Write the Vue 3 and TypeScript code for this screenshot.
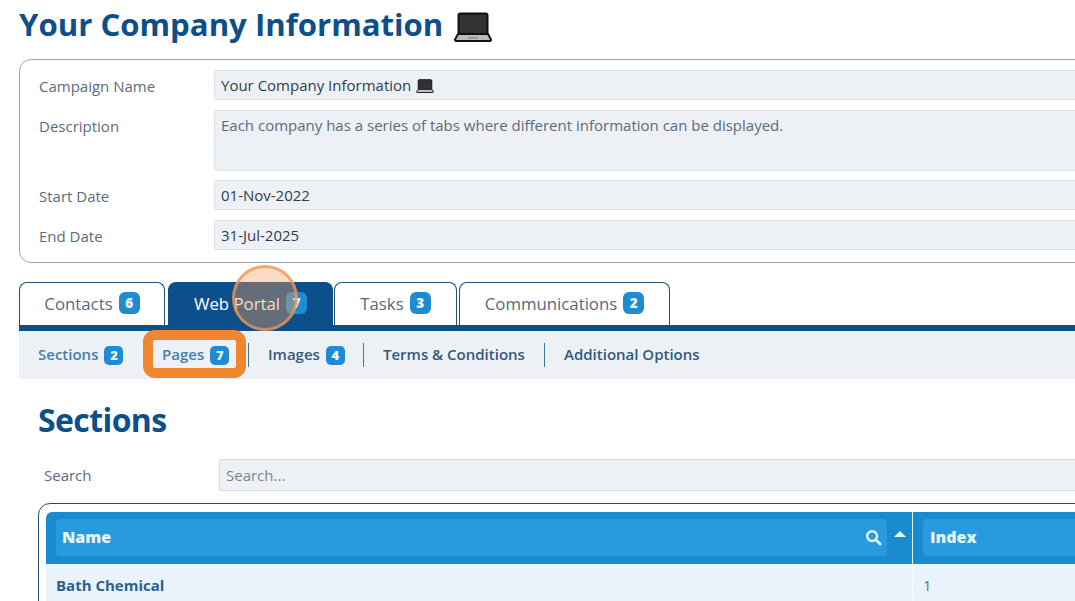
<script setup lang="ts">
const fields = [
  { label: 'Campaign Name', value: 'Your Company Information', icon: true, tall: false },
  { label: 'Description', value: 'Each company has a series of tabs where different information can be displayed.', icon: false, tall: true },
  { label: 'Start Date', value: '01-Nov-2022', icon: false, tall: false },
  { label: 'End Date', value: '31-Jul-2025', icon: false, tall: false },
]
const tabs = [
  { name: 'Contacts', n: 6, cls: 't-contacts' },
  { name: 'Web Portal', n: 7, cls: 't-web active' },
  { name: 'Tasks', n: 3, cls: 't-tasks' },
  { name: 'Communications', n: 2, cls: 't-comm' },
]
const subs = [
  { name: 'Sections', n: 2, cls: 's-sections light' },
  { name: 'Pages', n: 7, cls: 's-pages light' },
  { name: 'Images', n: 4, cls: 's-images' },
  { name: 'Terms & Conditions', n: 0, cls: 's-terms' },
  { name: 'Additional Options', n: 0, cls: 's-add' },
]
</script>

<template>
  <div class="page">
    <h1 class="title">
      <span>Your Company Information</span>
      <svg class="laptop-lg" viewBox="0 0 38 30" aria-hidden="true">
        <rect x="4.5" y="1.5" width="29" height="21" rx="2" fill="#333335" stroke="#111" stroke-width="2" />
        <path d="M4 22h30l3 5.5q.3 1.5-1.5 1.5h-33q-1.8 0-1.5-1.5z" fill="#b9bcc0" stroke="#111" stroke-width="2" />
        <rect x="14" y="25" width="10" height="1.5" fill="#8a8d92" />
      </svg>
    </h1>

    <section class="card">
      <div v-for="f in fields" :key="f.label" class="row">
        <label class="label">{{ f.label }}</label>
        <div class="control" :class="{ tall: f.tall }">
          <span>{{ f.value }}</span>
          <svg v-if="f.icon" class="laptop-sm" viewBox="0 0 38 30" aria-hidden="true">
            <rect x="4.5" y="1.5" width="29" height="21" rx="2" fill="#333335" stroke="#111" stroke-width="2" />
            <path d="M4 22h30l3 5.5q.3 1.5-1.5 1.5h-33q-1.8 0-1.5-1.5z" fill="#b9bcc0" stroke="#111" stroke-width="2" />
          </svg>
        </div>
      </div>
    </section>

    <nav class="tabs">
      <div v-for="t in tabs" :key="t.name" class="tab" :class="t.cls">
        {{ t.name }} <b class="badge">{{ t.n }}</b>
      </div>
    </nav>

    <nav class="subnav">
      <div v-for="s in subs" :key="s.name" class="sub" :class="s.cls">
        {{ s.name }} <b v-if="s.n" class="badge small">{{ s.n }}</b>
      </div>
    </nav>

    <section class="sections">
      <h2 class="heading">Sections</h2>
      <div class="search">
        <label class="search-label">Search</label>
        <div class="search-input">Search...</div>
      </div>
      <div class="table">
        <div class="thead">
          <div class="th th-name">
            <div class="th-inner">
              <span>Name</span>
              <svg class="mag" viewBox="0 0 18 18" aria-hidden="true">
                <circle cx="7.5" cy="7.5" r="5.2" fill="none" stroke="#dff3ff" stroke-width="2.6" />
                <path d="M11.5 11.5L16 16" stroke="#dff3ff" stroke-width="3" stroke-linecap="round" />
              </svg>
            </div>
            <i class="caret"></i>
          </div>
          <div class="th th-index">
            <div class="th-inner"><span>Index</span></div>
          </div>
        </div>
        <div class="tr">
          <div class="td td-name">Bath Chemical</div>
          <div class="td td-index">1</div>
        </div>
      </div>
    </section>

    <div class="highlight"></div>
    <div class="ring"></div>
  </div>
</template>

<style>
html, body { margin: 0; overflow: hidden; background: #fff; }
</style>

<style scoped>
.page {
  position: relative;
  width: 1075px;
  height: 601px;
  overflow: hidden;
  background: #fff;
  font-family: "Open Sans", "Liberation Sans", sans-serif;
  color: #3b4a5a;
}
.title {
  display: flex;
  align-items: center;
  gap: 11px;
  height: 48px;
  margin: 0 0 11px 19px;
  font-size: 31.15px;
  font-weight: 700;
  color: #0c4f8b;
  white-space: nowrap;
}
.laptop-lg { width: 38px; height: 30px; margin-top: 5px; }
.laptop-sm { width: 18px; height: 14px; margin-left: 5px; vertical-align: -2px; }
.card {
  width: 1100px;
  box-sizing: border-box;
  height: 204px;
  margin-left: 19px;
  padding: 10px 0 0 19px;
  border: 1px solid #9fa8b0;
  border-radius: 12px;
  display: flex;
  flex-direction: column;
  gap: 10px;
}
.row { display: flex; }
.label {
  width: 175px;
  flex: none;
  padding-top: 4px;
  font-size: 15px;
  line-height: 24px;
  color: #5d6b78;
}
.control {
  flex: 1;
  box-sizing: border-box;
  height: 30px;
  padding: 2px 6px;
  font-size: 15px;
  line-height: 24px;
  color: #333d47;
  background: #edf1f6;
  border: 1px solid #dde2e8;
  border-radius: 3px;
}
.control.tall { height: 61px; margin-bottom: -1px; color: #5d6b78; }
.tabs {
  display: flex;
  height: 43px;
  margin: 19px 0 0 19px;
}
.tab {
  box-sizing: border-box;
  display: flex;
  align-items: center;
  justify-content: center;
  gap: 6px;
  height: 43px;
  padding-bottom: 2px;
  font-size: 16.8px;
  color: #56697d;
  white-space: nowrap;
  background: #fff;
  border: 1px solid #1f5370;
  border-bottom: 0;
  border-radius: 8px 8px 0 0;
}
.t-contacts { width: 146px; margin-right: 3px; }
.t-web { width: 165px; margin-right: 1px; }
.t-tasks { width: 123px; margin-right: 2px; }
.t-comm { width: 211px; }
.tab.active { color: #fff; background: #0c4f8b; border-color: #0c4f8b; }
.badge {
  display: inline-flex;
  align-items: center;
  justify-content: center;
  width: 21px;
  height: 22px;
  font-size: 13.5px;
  font-weight: 800;
  color: #e9f6ff;
  background: #1f8bd1;
  border-radius: 6px;
}
.badge.small { width: 19px; height: 19px; margin-top: 2px; font-size: 13px; border-radius: 5px; }
.subnav {
  display: flex;
  align-items: center;
  height: 48px;
  margin-left: 19px;
  border-top: 6px solid #0c4f8b;
  background: #edf1f6;
}
.sub {
  display: flex;
  align-items: center;
  gap: 6px;
  box-sizing: border-box;
  height: 24px;
  padding-bottom: 2px;
  font-size: 15px;
  font-weight: 600;
  color: #34597c;
  white-space: nowrap;
}
.sub.light { color: #4480ad; }
.s-sections { margin-left: 19px; width: 106px; border-right: 1px solid #3e7a9f; }
.s-pages { margin-left: 18px; width: 87px; border-right: 1px solid #3e7a9f; }
.s-images { margin-left: 19px; width: 96px; border-right: 1px solid #3e7a9f; }
.s-terms { margin-left: 19px; width: 162px; border-right: 1px solid #3e7a9f; }
.s-add { margin-left: 19px; }
.sections { margin-left: 38px; width: 1100px; }
.heading {
  margin: 0;
  padding-top: 20px;
  height: 60px;
  box-sizing: border-box;
  font-size: 32px;
  line-height: 42px;
  font-weight: 700;
  letter-spacing: -0.6px;
  color: #0c4f8b;
}
.search { display: flex; align-items: center; height: 32px; margin-top: 20px; }
.search-label { width: 181px; padding-left: 6px; box-sizing: border-box; font-size: 15px; color: #5d6b78; }
.search-input {
  flex: 1;
  box-sizing: border-box;
  height: 32px;
  padding: 0 6px;
  font-size: 15px;
  line-height: 30px;
  color: #7a8591;
  background: #edf1f6;
  border: 1px solid #d6dbe1;
  border-radius: 3px;
}
.table {
  margin-top: 12px;
  padding: 8px 7px 0;
  height: 120px;
  border: 1px solid #1f5370;
  border-radius: 12px;
}
.thead {
  display: flex;
  height: 52px;
  background: #1b8bd0;
  border-radius: 6px 6px 0 0;
  overflow: hidden;
}
.th { position: relative; display: flex; align-items: flex-start; box-sizing: border-box; padding: 7px 10px; }
.th-name { width: 866px; flex: none; padding-right: 25px; }
.th-index { flex: 1; border-left: 1px solid #e6f4fd; }
.th-inner {
  flex: 1;
  box-sizing: border-box;
  height: 37px;
  display: flex;
  align-items: center;
  justify-content: space-between;
  padding: 0 5px 2px 6px;
  background: #2a9ade;
  border-radius: 4px;
  font-size: 16px;
  font-weight: 800;
  color: #e6f6ff;
}
.th-index .th-inner { padding-left: 7px; }
.mag { width: 17px; height: 17px; margin-top: 2px; }
.caret {
  position: absolute;
  top: 19px;
  right: 6px;
  width: 0;
  height: 0;
  border-left: 6px solid transparent;
  border-right: 6px solid transparent;
  border-bottom: 6px solid #e6f6ff;
}
.tr { display: flex; height: 42px; background: #e9f3fb; }
.td { display: flex; align-items: center; box-sizing: border-box; font-size: 15px; }
.td-name { width: 866px; flex: none; padding-left: 10px; font-weight: 700; color: #2f5f8f; }
.td-index { flex: 1; padding-left: 10px; border-left: 1px solid #f6fbff; color: #6b7782; }
.highlight {
  position: absolute;
  left: 143px;
  top: 330px;
  width: 103px;
  height: 48px;
  box-sizing: border-box;
  border: 10px solid #ef872f;
  border-radius: 12px;
}
.ring {
  position: absolute;
  left: 232px;
  top: 265px;
  width: 66px;
  height: 66px;
  box-sizing: border-box;
  border: 3px solid rgba(240, 150, 80, 0.75);
  border-radius: 50%;
  background: rgba(245, 160, 95, 0.38);
}
</style>
